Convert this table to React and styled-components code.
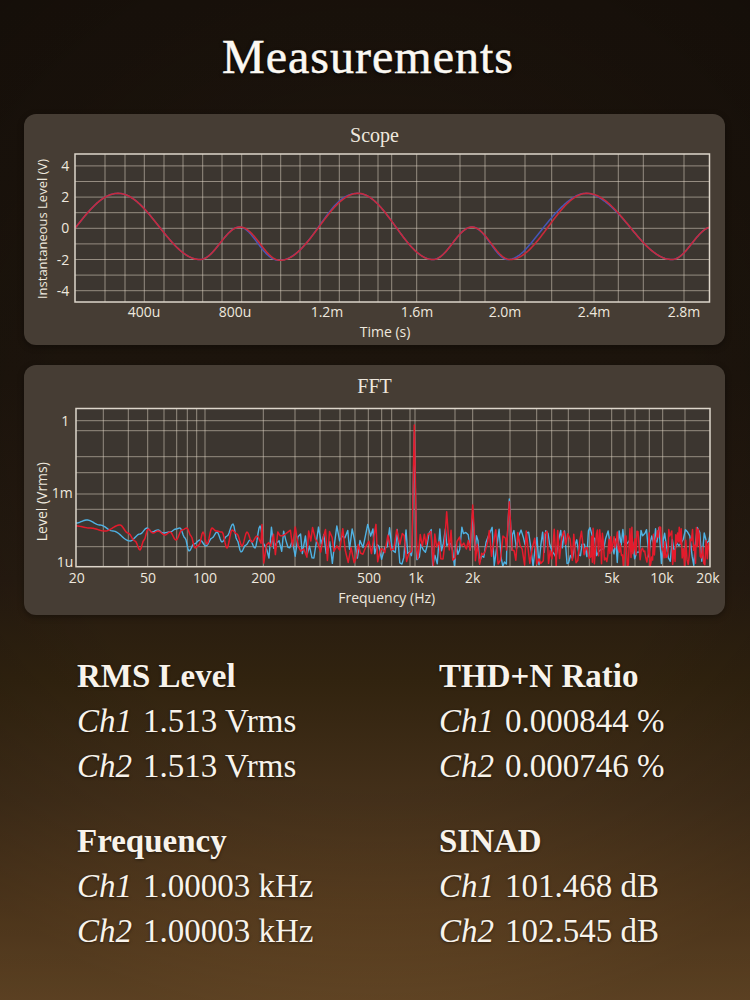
import React from 'react';
import styled, { createGlobalStyle } from 'styled-components';

const GlobalStyle = createGlobalStyle`
  html, body { margin: 0; padding: 0; }
  body { background: #1a120b; }
  * { box-sizing: border-box; }
`;

const Page = styled.div`
  position: relative;
  width: 750px;
  height: 1000px;
  overflow: hidden;
  padding: 33px 25px 0 24px;
  display: flex;
  flex-direction: column;
  font-family: "Liberation Serif", "Times New Roman", serif;
  color: #f8f3eb;
  background:
    radial-gradient(ellipse 75% 60% at 50% 45%, rgba(0,0,0,0) 55%, rgba(0,0,0,0.2) 100%),
    linear-gradient(to bottom, #1a120b 0%, #1c140c 38%, #251a10 58%, #31230f 68%, #44301a 80%, #5e4121 91%, #71502a 100%);
`;

const Title = styled.h1`
  margin: 0 0 33px;
  padding-right: 13px;
  font-size: 48px;
  line-height: 48px;
  font-weight: 400;
  letter-spacing: 1px;
  text-align: center;
  color: #fbf8f2;
  -webkit-text-stroke: 0.5px #fbf8f2;
  text-shadow: 0 2px 4px rgba(0, 0, 0, 0.7);
`;

const Panels = styled.div`
  display: flex;
  flex-direction: column;
  gap: 20px;
`;

const Panel = styled.section`
  height: ${(p) => p.$h}px;
  padding-top: 11px;
  border-radius: 12px;
  background: #463d34;
  display: flex;
  flex-direction: column;
  box-shadow: 0 2px 6px rgba(0, 0, 0, 0.35);
`;

const PanelTitle = styled.div`
  font-size: 20px;
  line-height: 20px;
  text-align: center;
  color: #eee8de;
`;

const ChartSvg = styled.svg`
  display: block;
`;

const TickLabel = styled.text`
  font-family: "Open Sans", "DejaVu Sans", sans-serif;
  font-size: 14px;
  fill: #eee8de;
`;

const AxisTitle = styled.text`
  font-family: "Open Sans", "DejaVu Sans", sans-serif;
  font-size: ${(p) => p.$size || 14}px;
  fill: #eee8de;
`;

const Stats = styled.div`
  margin: 39px 0 0 53px;
  display: grid;
  grid-template-columns: 362px 1fr;
  row-gap: 30px;
`;

const Block = styled.div`
  display: flex;
  flex-direction: column;
`;

const Heading = styled.div`
  font-size: 33px;
  line-height: 45px;
  font-weight: 700;
  white-space: nowrap;
  text-shadow: 0 1px 3px rgba(0, 0, 0, 0.5);
`;

const Row = styled.div`
  font-size: 33px;
  line-height: 45px;
  white-space: nowrap;
  text-shadow: 0 1px 3px rgba(0, 0, 0, 0.5);
`;

const Ch = styled.em`
  font-style: italic;
  margin-right: 11px;
`;

/* ---------- data helpers ---------- */

function mulberry32(a) {
  return function () {
    a |= 0;
    a = (a + 0x6d2b79f5) | 0;
    let t = Math.imul(a ^ (a >>> 15), 1 | a);
    t = (t + Math.imul(t ^ (t >>> 7), 61 | t)) ^ t;
    return ((t ^ (t >>> 14)) >>> 0) / 4294967296;
  };
}

function linePath(pts) {
  return pts.map((p, i) => `${i ? 'L' : 'M'}${p[0].toFixed(2)} ${p[1].toFixed(2)}`).join(' ');
}

function cosInterp(knots, x) {
  for (let i = 0; i < knots.length - 1; i++) {
    const [x0, v0] = knots[i];
    const [x1, v1] = knots[i + 1];
    if (x >= x0 && x <= x1) {
      const t = (x - x0) / (x1 - x0);
      return v0 + (v1 - v0) * (1 - Math.cos(Math.PI * t)) / 2;
    }
  }
  return knots[knots.length - 1][1];
}

/* Scope: absolute page x with voltage extrema */
const EXT = [
  [32, -2.24], [118, 2.24], [200, -2.0], [240, 0.08], [280, -2.05],
  [358, 2.24], [433, -2.0], [472, 0.08], [510, -2.0], [587, 2.24],
  [672, -2.0], [712, 0.08],
];

const OX = 24;
const scopeY = (v) => 83.3 - v * 15.6;

function scopeTrace(shiftFn) {
  const pts = [];
  for (let x = 75; x <= 709.6; x += 1) {
    pts.push([x - OX, scopeY(cosInterp(EXT, x + shiftFn(x)))]);
  }
  return linePath(pts);
}

const g = (x, c, w) => Math.exp(-(((x - c) / w) ** 2));
const SCOPE_RED = scopeTrace(() => 0);
const SCOPE_BLUE = scopeTrace((x) => 4.5 * g(x, 535, 32) + 2 * g(x, 262, 22) + 1.5 * g(x, 340, 18) + 1.5 * g(x, 600, 18));

/* FFT (absolute page coordinates, shifted into the svg) */
const FFT_OY = 396;

const BLUE_LOW = [[76, 523], [87, 520], [100, 525], [113, 531], [130, 541], [140, 534], [147, 528], [152, 532],
  [158, 530], [163, 533], [170, 532], [176, 529], [180, 528], [185, 538], [189, 551], [194, 544], [200, 540],
  [206, 546], [212, 538], [217, 532], [222, 542], [227, 536], [233, 524], [237, 540], [241, 552], [246, 545],
  [250, 540], [255, 548], [260, 526], [264, 545]];

const RED_LOW = [[76, 526], [90, 528], [105, 531], [120, 525], [128, 533], [135, 541], [140, 550], [144, 540],
  [148, 529], [153, 533], [158, 531], [165, 535], [170, 532], [176, 540], [182, 530], [187, 528], [191, 536],
  [195, 548], [199, 545], [203, 532], [207, 544], [212, 528], [216, 531], [222, 532], [227, 548], [232, 530],
  [237, 534], [242, 546], [247, 532], [252, 542], [257, 536], [262, 544]];

function fftTrace(seed, low, peaks, denseStep) {
  const r = mulberry32(seed);
  const pts = [];
  const lowEnd = low[low.length - 1][0];
  for (let x = 76; x < lowEnd; x += 1) pts.push([x, cosInterp(low, x)]);
  let noise = [];
  let x = lowEnd;
  while (x <= 712) {
    let step, center, amp;
    if (x < 400) { step = 2.4; center = 544; amp = 20; }
    else if (x < 590) { step = 2; center = 547; amp = 20; }
    else { step = denseStep; center = 547; amp = 20; }
    let y = center + (r() * 2 - 1) * amp;
    noise.push([x, Math.min(566.5, y)]);
    x += step * (0.7 + r() * 0.6);
  }
  for (const [px, py, w] of peaks) {
    noise = noise.filter((p) => Math.abs(p[0] - px) > w);
    noise.push([px - w, 550], [px, py], [px + w, 550]);
  }
  noise.sort((a, b) => a[0] - b[0]);
  return linePath([...pts, ...noise].map(([a, b]) => [a - OX, b - FFT_OY]));
}

const FFT_BLUE = fftTrace(11, BLUE_LOW, [[414.3, 432, 2.2], [472.7, 512, 2.4], [509.3, 499, 2.6]], 2.0);
const FFT_RED = fftTrace(7, RED_LOW, [[414.3, 425, 2.4], [446.7, 511.7, 2.6], [472.7, 505, 2.6], [509.3, 501.7, 2.8]], 1.0);

/* ---------- chart configs ---------- */

const scopeConfig = {
  id: 'scope',
  height: 200,
  plot: { x0: 51, x1: 685.5, y0: 9, y1: 157 },
  hLines: [4, 3, 2, 1, 0, -1, -2, -3, -4].map(scopeY),
  vLines: [105, 125, 144.3, 164, 183, 202.7, 222, 241.7, 261.7, 280.7, 300, 320, 339.3, 359.3,
    378, 391.7, 416.7, 460, 485, 525, 551.7, 594, 618.3, 643.3, 684].map((x) => x - OX),
  yLabels: [[4, '4'], [2, '2'], [0, '0'], [-2, '-2'], [-4, '-4']].map(([v, t]) => ({ x: 45.3, y: scopeY(v), t })),
  xLabels: [[144, '400u'], [235, '800u'], [327, '1.2m'], [417, '1.6m'], [505, '2.0m'], [594, '2.4m'], [684, '2.8m']]
    .map(([x, t]) => ({ x: x - OX, t })),
  xLabelY: 172.3,
  xTitle: { x: 361, y: 191.7, t: 'Time (s)' },
  yTitle: { x: 17.7, y: 84, t: 'Instantaneous Level (V)', size: 13 },
  traces: [
    { d: SCOPE_BLUE, color: '#4656b8', w: 1.5 },
    { d: SCOPE_RED, color: '#c82a3a', w: 1.6 },
  ],
};

const fftConfig = {
  id: 'fft',
  height: 219,
  plot: { x0: 52, x1: 686, y0: 12.5, y1: 170.7 },
  hLines: [420.7, 430.7, 456.7, 472.7, 494, 509.3, 546.7].map((y) => y - FFT_OY),
  vLines: [103.3, 128.3, 147.7, 164, 176.7, 187.3, 196.7, 205, 263.3, 295, 320, 340, 355, 368.3,
    381.7, 391.7, 410, 415, 455, 472.7, 510, 536.7, 551.7, 568.3, 589.3, 611.7, 625, 635, 649.3, 662.7, 685]
    .map((x) => x - OX),
  yLabels: [
    { x: 45.3, y: 24.7, t: '1' },
    { x: 48.7, y: 96.7, t: '1m' },
    { x: 49.3, y: 165.5, t: '1u' },
  ],
  xLabels: [[76.7, '20'], [148, '50'], [205, '100'], [263.3, '200'], [369, '500'], [416, '1k'],
    [472.7, '2k'], [612, '5k'], [662, '10k'], [708, '20k']].map(([x, t]) => ({ x: x - OX, t })),
  xLabelY: 186.7,
  xTitle: { x: 362.7, y: 207.3, t: 'Frequency (Hz)' },
  yTitle: { x: 17.7, y: 105.7, t: 'Level (Vrms)', size: 14 },
  traces: [
    { d: FFT_BLUE, color: '#4fb2e4', w: 1.4 },
    { d: FFT_RED, color: '#e41b2c', w: 1.5 },
  ],
};

function Chart({ c }) {
  const { plot } = c;
  const clip = `clip-${c.id}`;
  return (
    <ChartSvg width={701} height={c.height} viewBox={`0 0 701 ${c.height}`}>
      <defs>
        <clipPath id={clip}>
          <rect x={plot.x0} y={plot.y0} width={plot.x1 - plot.x0} height={plot.y1 - plot.y0} />
        </clipPath>
      </defs>
      <rect x={plot.x0} y={plot.y0} width={plot.x1 - plot.x0} height={plot.y1 - plot.y0} fill="#3c3630" />
      <g stroke="rgba(222, 212, 196, 0.55)" strokeWidth="1">
        {c.vLines.map((x) => (
          <line key={`v${x}`} x1={x} x2={x} y1={plot.y0} y2={plot.y1} />
        ))}
        {c.hLines.map((y) => (
          <line key={`h${y}`} x1={plot.x0} x2={plot.x1} y1={y} y2={y} />
        ))}
      </g>
      <g clipPath={`url(#${clip})`} fill="none" strokeLinejoin="round" strokeLinecap="round">
        {c.traces.map((t, i) => (
          <path key={i} d={t.d} stroke={t.color} strokeWidth={t.w} />
        ))}
      </g>
      <rect
        x={plot.x0}
        y={plot.y0}
        width={plot.x1 - plot.x0}
        height={plot.y1 - plot.y0}
        fill="none"
        stroke="#ddd6ca"
        strokeWidth="1.5"
      />
      {c.yLabels.map((l) => (
        <TickLabel key={`y${l.t}`} x={l.x} y={l.y + 5} textAnchor="end">{l.t}</TickLabel>
      ))}
      {c.xLabels.map((l) => (
        <TickLabel key={`x${l.t}`} x={l.x} y={c.xLabelY} textAnchor="middle">{l.t}</TickLabel>
      ))}
      <AxisTitle x={c.xTitle.x} y={c.xTitle.y} textAnchor="middle">{c.xTitle.t}</AxisTitle>
      <AxisTitle
        $size={c.yTitle.size}
        transform={`translate(${c.yTitle.x} ${c.yTitle.y}) rotate(-90)`}
        textAnchor="middle"
        dominantBaseline="central"
      >
        {c.yTitle.t}
      </AxisTitle>
    </ChartSvg>
  );
}

const STATS = [
  { title: 'RMS Level', rows: [['Ch1', '1.513 Vrms'], ['Ch2', '1.513 Vrms']] },
  { title: 'THD+N Ratio', rows: [['Ch1', '0.000844 %'], ['Ch2', '0.000746 %']] },
  { title: 'Frequency', rows: [['Ch1', '1.00003 kHz'], ['Ch2', '1.00003 kHz']] },
  { title: 'SINAD', rows: [['Ch1', '101.468 dB'], ['Ch2', '102.545 dB']] },
];

export default function App() {
  return (
    <>
      <GlobalStyle />
      <Page>
        <Title>Measurements</Title>
        <Panels>
          <Panel $h={231}>
            <PanelTitle>Scope</PanelTitle>
            <Chart c={scopeConfig} />
          </Panel>
          <Panel $h={250}>
            <PanelTitle>FFT</PanelTitle>
            <Chart c={fftConfig} />
          </Panel>
        </Panels>
        <Stats>
          {STATS.map((s) => (
            <Block key={s.title}>
              <Heading>{s.title}</Heading>
              {s.rows.map(([ch, val]) => (
                <Row key={ch}>
                  <Ch>{ch}</Ch>
                  {val}
                </Row>
              ))}
            </Block>
          ))}
        </Stats>
      </Page>
    </>
  );
}
